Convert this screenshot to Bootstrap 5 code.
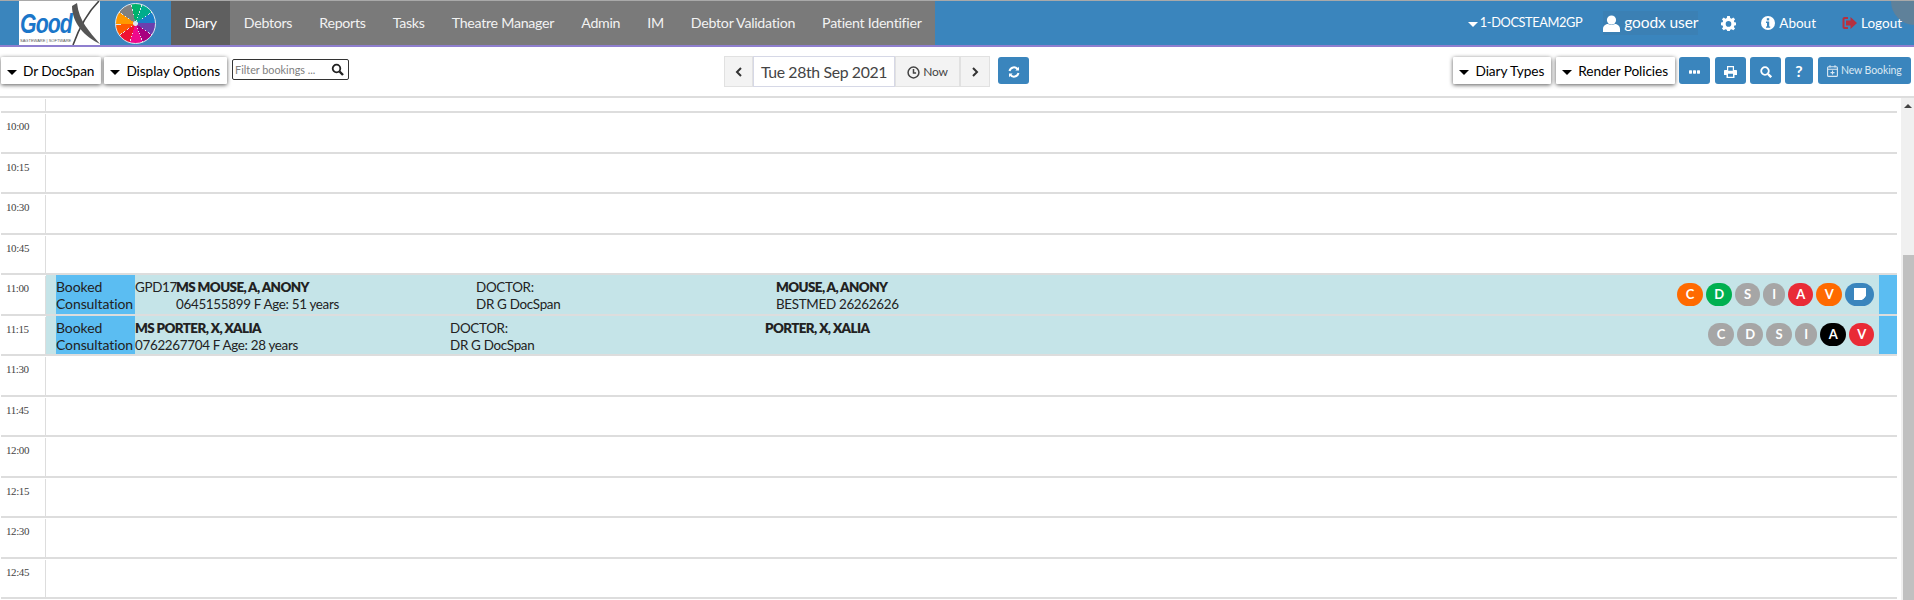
<!DOCTYPE html>
<html lang="en">
<head>
    <meta charset="UTF-8">
    <meta name="viewport" content="width=device-width, initial-scale=1.0">
    <title>GoodX Diary</title>
    <link href="https://cdn.jsdelivr.net/npm/bootstrap@5.3.0/dist/css/bootstrap.min.css" rel="stylesheet">
    <style>
        body {
            font-family: "Lato", "Liberation Sans", sans-serif;
            font-size: 14px;
            color: #222;
            background-color: #fff;
            overflow: hidden;
            height: 600px;
        }
        .gx-top {
            height: 47px;
            background-color: #3a85bd;
            border-top: 1px solid #a9a9a9;
            border-bottom: 2px solid #8f7fcf;
            position: relative;
            overflow: hidden;
        }
        .gx-corner {
            position: absolute;
            top: -24px;
            right: -25px;
            width: 48px;
            height: 48px;
            border-radius: 50%;
            background-color: rgba(125, 125, 125, 0.55);
        }
        .gx-logo {
            position: relative;
            width: 81px;
            height: 44px;
            margin-left: 19px;
            background-color: #fff;
            overflow: hidden;
        }
        .gx-logo-word {
            position: absolute;
            left: 1px;
            top: 9px;
            font-family: "Liberation Sans", sans-serif;
            font-weight: 700;
            font-style: italic;
            font-size: 28px;
            line-height: 28px;
            letter-spacing: -1.2px;
            color: #1b76c9;
            transform: scaleX(0.76);
            transform-origin: left top;
        }
        .gx-logo-sub {
            position: absolute;
            left: 1px;
            top: 37px;
            font-family: "Liberation Sans", sans-serif;
            font-size: 4px;
            line-height: 5px;
            color: #555;
            white-space: nowrap;
        }
        .gx-logo-x {
            position: absolute;
            left: 0;
            top: 0;
        }
        .gx-wheel-box {
            width: 71px;
            height: 44px;
        }
        .gx-wheel {
            width: 41px;
            height: 41px;
            border-radius: 50%;
            border: 1px solid #dfe6ee;
            background: radial-gradient(circle, #dfe6ee 0 2px, transparent 3px),
                conic-gradient(from -12deg,
                #00b26b 0 30deg, #dfe6ee 30deg 32deg,
                #00ad8c 32deg 66deg, #dfe6ee 66deg 68deg,
                #1a7fc9 68deg 100deg, #dfe6ee 100deg 102deg,
                #6b3fae 102deg 136deg, #dfe6ee 136deg 138deg,
                #a8007f 138deg 170deg, #dfe6ee 170deg 172deg,
                #ee0a8c 172deg 208deg, #dfe6ee 208deg 210deg,
                #ee1133 210deg 245deg, #dfe6ee 245deg 247deg,
                #ff5a00 247deg 278deg, #dfe6ee 278deg 280deg,
                #ff9800 280deg 316deg, #dfe6ee 316deg 318deg,
                #808080 318deg 358deg, #dfe6ee 358deg 360deg);
        }
        .gx-menu {
            background-color: #7a7a7a;
            height: 44px;
        }
        .gx-menu .nav-link {
            color: #f2f2f2;
            font-size: 14.2px;
            letter-spacing: -0.27px;
            line-height: 44px;
            padding: 0 13.5px;
        }
        .gx-menu .nav-link.active {
            background-color: #5f5f5f;
            color: #fff;
        }
        .gx-right {
            color: #fff;
            font-size: 13.5px;
            padding-right: 12px;
        }
        .gx-site {
            margin-right: 21px;
            font-size: 12.8px;
            letter-spacing: -0.4px;
        }
        .gx-user {
            font-size: 15.5px;
            letter-spacing: -0.1px;
            background-color: #3b80b4;
            margin-right: 23px;
        }
        .gx-gear-gap {
            margin-right: 25px;
        }
        .gx-about-gap {
            margin-right: 26px;
        }
        .gx-caret {
            display: inline-block;
            width: 0;
            height: 0;
            border-left: 5px solid transparent;
            border-right: 5px solid transparent;
            border-top: 5px solid #000;
            vertical-align: middle;
        }
        .gx-caret-light {
            border-top-color: #fff;
            margin-right: 2px;
        }
        .gx-tools {
            height: 49px;
            padding: 10px 3px 0 1px;
        }
        .gx-left-tools {
            width: 723px;
            gap: 3px;
        }
        .gx-drop {
            height: 27px;
            padding: 0 7px 0 6px;
            font-size: 13.7px;
            letter-spacing: -0.1px;
            line-height: 27px;
            color: #000;
            background-color: #fff;
            border: 0;
            border-radius: 1px;
            box-shadow: 0 1px 4px rgba(0, 0, 0, 0.65);
            white-space: nowrap;
        }
        .gx-drop .gx-caret {
            margin-right: 6px;
        }
        .gx-filter {
            position: relative;
            width: 117px;
            height: 21px;
            margin: 2px 0 0 2px;
            border: 1px solid #333;
            border-radius: 2px;
            font-size: 10.8px;
            line-height: 19px;
            color: #808080;
            padding-left: 2px;
        }
        .gx-filter svg {
            position: absolute;
            right: 4px;
            top: 3px;
        }
        .gx-date-group {
            margin-top: -1px;
            height: 31px;
        }
        .gx-page-btn {
            height: 31px;
            padding: 0;
            border: 1px solid #e1e1e1;
            border-radius: 0;
            background-color: #f3f3f3;
            color: #444;
            font-size: 12px;
            letter-spacing: -0.2px;
        }
        .gx-prev {
            width: 29px;
        }
        .gx-next {
            width: 30px;
        }
        .gx-date {
            width: 142px;
            height: 31px;
            line-height: 29px;
            border: 1px solid #d6d8e6;
            background-color: #fff;
            font-size: 15.8px;
            letter-spacing: -0.35px;
            color: #444;
            text-align: center;
            white-space: nowrap;
        }
        .gx-now {
            width: 65px;
        }
        .gx-blue {
            height: 27px;
            background-color: #3a85bd;
            border: 0;
            border-radius: 3px;
            color: #fff;
            padding: 0;
        }
        .gx-blue:hover {
            background-color: #2f74a8;
            color: #fff;
        }
        .gx-refresh {
            width: 31px;
            margin-left: 8px;
        }
        .gx-icon-btn {
            width: 31px;
        }
        .gx-help {
            width: 28px;
        }
        .gx-new {
            width: 93px;
            font-size: 10.5px;
            letter-spacing: -0.1px;
            color: #dbe8f3;
            white-space: nowrap;
        }
        .gx-extra-gap {
            margin-left: 1px;
        }
        .gx-diary {
            border-top: 2px solid #ddd;
        }
        .gx-slots {
            width: 1896px;
            margin-left: 1px;
        }
        .gx-slot {
            height: 40.5px;
            border-bottom: 2px solid #ddd;
            box-sizing: border-box;
        }
        .gx-slot-top {
            height: 15px;
        }
        .gx-time {
            width: 45px;
            flex: none;
            border-right: 1px solid #ddd;
            margin-top: 1px;
            padding: 5px 0 0 5px;
            font-family: "Liberation Serif", serif;
            font-size: 11px;
            line-height: 14px;
            letter-spacing: -0.4px;
            color: #444;
        }
        .gx-booking {
            background-color: #c5e4e8;
            font-size: 13.4px;
            letter-spacing: -0.3px;
            line-height: 17px;
            padding-left: 10px;
            white-space: nowrap;
        }
        .gx-booking strong {
            font-weight: 800;
            letter-spacing: -0.6px;
        }
        .gx-type {
            width: 79px;
            flex: none;
            background-color: #5bbdf2;
            font-size: 14px;
            letter-spacing: -0.1px;
            padding: 3px 0 0 0;
            overflow: hidden;
        }
        .gx-booking-text {
            padding-top: 4px;
        }
        .gx-code {
            width: 41px;
        }
        .gx-col {
            width: 300px;
        }
        .gx-col-wide {
            width: 315px;
        }
        .gx-pills {
            gap: 3px;
            padding-right: 5px;
        }
        .gx-pill {
            width: 26px;
            height: 23px;
            border-radius: 12px;
            font-size: 13px;
            font-weight: 700;
            line-height: 23px;
            color: #fff;
            text-align: center;
            background-color: #a6a6a6;
        }
        .gx-pill-slim {
            width: 25px;
        }
        .gx-pill-narrow {
            width: 22px;
        }
        .gx-orange { background-color: #ff6a00; }
        .gx-green { background-color: #00b050; }
        .gx-red { background-color: #e92b36; }
        .gx-black { background-color: #000; }
        .gx-pill-note {
            width: 29px;
            background-color: #3a85bd;
        }
        .gx-end {
            width: 18px;
            flex: none;
            background-color: #5bbdf2;
        }
        .gx-scroll {
            width: 13px;
            margin-left: 4px;
            background-color: #f0f0f0;
            padding-top: 157px;
            position: relative;
        }
        .gx-scroll-arrow {
            position: absolute;
            top: 6px;
            left: 3px;
            width: 0;
            height: 0;
            border-left: 4px solid transparent;
            border-right: 4px solid transparent;
            border-bottom: 4px solid #444;
        }
        .gx-thumb {
            width: 11px;
            height: 360px;
            margin-left: 2px;
            background-color: #c0c0c0;
        }
    </style>
</head>
<body>
    <nav class="gx-top d-flex align-items-start">
        <div class="gx-logo">
            <span class="gx-logo-word">Good</span>
            <span class="gx-logo-sub">SAGTEWARE | SOFTWARE</span>
            <svg class="gx-logo-x" width="81" height="44" viewBox="0 0 81 44">
                <path d="M80 0C72 8 62 22 54 44" fill="none" stroke="#444" stroke-width="1.6"/>
                <path d="M53 5C53 22 66 36 81 43C70 30 60 20 58 2Z" fill="#555"/>
            </svg>
        </div>
        <div class="gx-wheel-box d-flex align-items-center justify-content-center">
            <div class="gx-wheel"></div>
        </div>
        <ul class="nav gx-menu">
            <li class="nav-item"><a class="nav-link active" href="#">Diary</a></li>
            <li class="nav-item"><a class="nav-link" href="#">Debtors</a></li>
            <li class="nav-item"><a class="nav-link" href="#">Reports</a></li>
            <li class="nav-item"><a class="nav-link" href="#">Tasks</a></li>
            <li class="nav-item"><a class="nav-link" href="#">Theatre Manager</a></li>
            <li class="nav-item"><a class="nav-link" href="#">Admin</a></li>
            <li class="nav-item"><a class="nav-link" href="#">IM</a></li>
            <li class="nav-item"><a class="nav-link" href="#">Debtor Validation</a></li>
            <li class="nav-item"><a class="nav-link" href="#">Patient Identifier</a></li>
        </ul>
        <div class="gx-right ms-auto d-flex align-items-center h-100">
            <span class="gx-site"><span class="gx-caret gx-caret-light"></span>1-DOCSTEAM2GP</span>
            <span class="gx-user d-flex align-items-center gap-1">
                <svg width="17" height="17" viewBox="0 0 17 17" fill="#fff"><circle cx="8.5" cy="5" r="4.6"/><path d="M0 17V14C0 10.5 3 9 5 9C6 10 11 10 12 9C14 9 17 10.5 17 14V17Z"/></svg>
                goodx user
            </span>
            <svg class="gx-gear-gap" width="15" height="15" viewBox="0 0 16 16" fill="#fff"><path fill-rule="evenodd" d="M6.6 0H9.4L9.8 2.2L11.3 2.8L13.1 1.5L15 3.4L13.7 5.2L14.3 6.7L16 7V9.8L14.3 10.1L13.7 11.6L15 13.4L13.1 15.3L11.3 14L9.8 14.6L9.4 16H6.6L6.2 14.6L4.7 14L2.9 15.3L1 13.4L2.3 11.6L1.7 10.1L0 9.8V7L1.7 6.7L2.3 5.2L1 3.4L2.9 1.5L4.7 2.8L6.2 2.2ZM8 5.4A3 3 0 1 0 8 11.4A3 3 0 1 0 8 5.4Z"/></svg>
            <span class="d-flex align-items-center gx-about-gap gap-1">
                <svg width="14" height="14" viewBox="0 0 14 14"><circle cx="7" cy="7" r="7" fill="#fff"/><rect x="5.8" y="2.2" width="2.4" height="2.2" fill="#3a85bd"/><path d="M5 5.6H8.2V10.4H9.2V11.8H5V10.4H6V7H5Z" fill="#3a85bd"/></svg>
                About
            </span>
            <span class="d-flex align-items-center gap-1">
                <svg width="15" height="14" viewBox="0 0 15 14" fill="#b5303f"><path d="M6 1H2.5C1.3 1 .5 1.8.5 3V11C.5 12.2 1.3 13 2.5 13H6V11H2.5V3H6Z"/><path d="M8.5 1L15 7L8.5 13V9.5H4V4.5H8.5Z"/></svg>
                Logout
            </span>
        </div>
        <div class="gx-corner"></div>
    </nav>

    <div class="gx-tools d-flex align-items-start">
        <div class="gx-left-tools d-flex align-items-start">
            <button class="btn gx-drop" type="button"><span class="gx-caret"></span>Dr DocSpan</button>
            <button class="btn gx-drop" type="button"><span class="gx-caret"></span>Display Options</button>
            <div class="gx-filter">Filter bookings ...
                <svg width="13" height="13" viewBox="0 0 13 13" fill="none" stroke="#222" stroke-width="1.8"><circle cx="5.5" cy="5.5" r="3.8"/><path d="M8.5 8.5L12 12" stroke-width="2.4"/></svg>
            </div>
        </div>
        <div class="d-flex gx-date-group">
            <button class="btn gx-page-btn gx-prev" type="button">
                <svg width="8" height="10" viewBox="0 0 8 10" fill="none" stroke="#333" stroke-width="2"><path d="M6 1L2 5L6 9"/></svg>
            </button>
            <div class="gx-date">Tue 28th Sep 2021</div>
            <button class="btn gx-page-btn gx-now" type="button">
                <svg width="13" height="13" viewBox="0 0 12 12" fill="none" stroke="#444" stroke-width="1.4"><circle cx="6" cy="6" r="5"/><path d="M6 2.8V6.4H8.4"/></svg>
                Now
            </button>
            <button class="btn gx-page-btn gx-next" type="button">
                <svg width="8" height="10" viewBox="0 0 8 10" fill="none" stroke="#333" stroke-width="2"><path d="M2 1L6 5L2 9"/></svg>
            </button>
        </div>
        <button class="btn gx-blue gx-refresh" type="button">
            <svg width="12" height="12" viewBox="0 0 12 12" fill="none" stroke="#fff" stroke-width="2"><path d="M1.5 5A4.6 4.6 0 0 1 9.8 3.4"/><path d="M10.5 7A4.6 4.6 0 0 1 2.2 8.6"/><path d="M11 .8V4.4H7.4Z" fill="#fff" stroke="none"/><path d="M1 11.2V7.6H4.6Z" fill="#fff" stroke="none"/></svg>
        </button>
        <div class="ms-auto d-flex align-items-start gap-1">
            <button class="btn gx-drop" type="button"><span class="gx-caret"></span>Diary Types</button>
            <button class="btn gx-drop gx-extra-gap" type="button"><span class="gx-caret"></span>Render Policies</button>
            <button class="btn gx-blue gx-icon-btn" type="button">
                <svg width="11" height="4" viewBox="0 0 11 4" fill="#fff"><rect width="3" height="3.4" y=".3" rx=".6"/><rect x="4" y=".3" width="3" height="3.4" rx=".6"/><rect x="8" y=".3" width="3" height="3.4" rx=".6"/></svg>
            </button>
            <button class="btn gx-blue gx-icon-btn gx-extra-gap" type="button">
                <svg width="13" height="12" viewBox="0 0 13 12" fill="#fff"><path fill-rule="evenodd" d="M3 0H10V4H12C12.6 4 13 4.4 13 5V9H10.5V12H2.5V9H0V5C0 4.4.4 4 1 4H3ZM4.2 1.2V4.8H8.8V1.2ZM4 7.8V10.8H9V7.8Z"/></svg>
            </button>
            <button class="btn gx-blue gx-icon-btn" type="button">
                <svg width="12" height="12" viewBox="0 0 12 12" fill="none" stroke="#fff" stroke-width="1.8"><circle cx="5" cy="5" r="3.8"/><path d="M8 8L11.2 11.2" stroke-width="2.4"/></svg>
            </button>
            <button class="btn gx-blue gx-help fw-bold" type="button">?</button>
            <button class="btn gx-blue gx-new gx-extra-gap" type="button">
                <svg width="11" height="12" viewBox="0 0 11 12" fill="none" stroke="#dbe8f3" stroke-width="1.1"><rect x=".6" y="1.8" width="9.8" height="9.6" rx="1"/><path d="M.6 4.2H10.4M3 .2V2.6M8 .2V2.6M5.5 5.6V9.6M3.5 7.6H7.5"/></svg>
                New Booking
            </button>
        </div>
    </div>

    <div class="gx-diary d-flex">
        <div class="gx-slots">
            <div class="gx-slot gx-slot-top d-flex"><div class="gx-time"></div></div>
            <div class="gx-slot d-flex"><div class="gx-time">10:00</div></div>
            <div class="gx-slot d-flex"><div class="gx-time">10:15</div></div>
            <div class="gx-slot d-flex"><div class="gx-time">10:30</div></div>
            <div class="gx-slot d-flex"><div class="gx-time">10:45</div></div>
            <div class="gx-slot d-flex">
                <div class="gx-time">11:00</div>
                <div class="gx-booking d-flex flex-grow-1">
                    <div class="gx-type">Booked<br>Consultation</div>
                    <div class="gx-booking-text d-flex">
                        <div class="gx-code">GPD17</div>
                        <div class="gx-col"><strong>MS MOUSE, A, ANONY</strong><br>0645155899 F Age: 51 years</div>
                        <div class="gx-col">DOCTOR:<br>DR G DocSpan</div>
                        <div class="gx-col"><strong>MOUSE, A, ANONY</strong><br>BESTMED 26262626</div>
                    </div>
                    <div class="gx-pills ms-auto d-flex align-items-center">
                        <span class="gx-pill gx-orange">C</span>
                        <span class="gx-pill gx-green">D</span>
                        <span class="gx-pill gx-pill-slim">S</span>
                        <span class="gx-pill gx-pill-narrow">I</span>
                        <span class="gx-pill gx-pill-slim gx-red">A</span>
                        <span class="gx-pill gx-orange">V</span>
                        <span class="gx-pill gx-pill-note d-flex align-items-center justify-content-center">
                            <svg width="12" height="12" viewBox="0 0 12 12" fill="#fff"><path d="M0 0H12V8L8 12H0Z"/><path d="M8.8 8.8H11.4L8.8 11.4Z"/></svg>
                        </span>
                    </div>
                    <div class="gx-end"></div>
                </div>
            </div>
            <div class="gx-slot d-flex">
                <div class="gx-time">11:15</div>
                <div class="gx-booking d-flex flex-grow-1">
                    <div class="gx-type">Booked<br>Consultation</div>
                    <div class="gx-booking-text d-flex">
                        <div class="gx-col-wide"><strong>MS PORTER, X, XALIA</strong><br>0762267704 F Age: 28 years</div>
                        <div class="gx-col-wide">DOCTOR:<br>DR G DocSpan</div>
                        <div class="gx-col-wide"><strong>PORTER, X, XALIA</strong></div>
                    </div>
                    <div class="gx-pills ms-auto d-flex align-items-center">
                        <span class="gx-pill">C</span>
                        <span class="gx-pill">D</span>
                        <span class="gx-pill">S</span>
                        <span class="gx-pill gx-pill-narrow">I</span>
                        <span class="gx-pill gx-black">A</span>
                        <span class="gx-pill gx-pill-slim gx-red">V</span>
                    </div>
                    <div class="gx-end"></div>
                </div>
            </div>
            <div class="gx-slot d-flex"><div class="gx-time">11:30</div></div>
            <div class="gx-slot d-flex"><div class="gx-time">11:45</div></div>
            <div class="gx-slot d-flex"><div class="gx-time">12:00</div></div>
            <div class="gx-slot d-flex"><div class="gx-time">12:15</div></div>
            <div class="gx-slot d-flex"><div class="gx-time">12:30</div></div>
            <div class="gx-slot d-flex"><div class="gx-time">12:45</div></div>
        </div>
        <div class="gx-scroll">
            <div class="gx-scroll-arrow"></div>
            <div class="gx-thumb"></div>
        </div>
    </div>

    <script src="https://cdn.jsdelivr.net/npm/bootstrap@5.3.0/dist/js/bootstrap.bundle.min.js"></script>
</body>
</html>
